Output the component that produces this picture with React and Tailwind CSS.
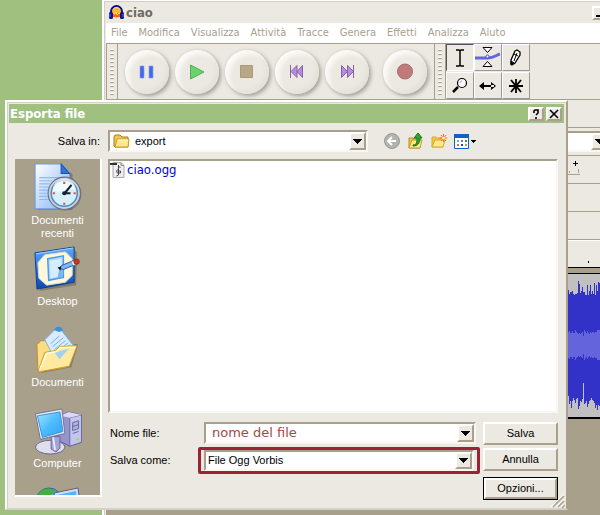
import React, { useState } from 'react';
import { clsx } from 'clsx';

const MENUS = ['File', 'Modifica', 'Visualizza', 'Attività', 'Tracce', 'Genera', 'Effetti', 'Analizza', 'Aiuto'];

// peak heights of the visible piece of the track, in pixels
const PEAK_TOP = [16, 20, 18, 18, 17, 20, 21, 20, 20, 19, 7, 10, 19, 17, 13, 18, 18, 21, 21, 11, 21, 17, 11, 20, 17, 20, 9, 21, 11, 17, 8, 9];
const PEAK_BOTTOM = [122, 130, 127, 134, 127, 124, 126, 129, 125, 124, 135, 132, 127, 128, 125, 109, 130, 129, 127, 133, 130, 127, 126, 124, 126, 127, 129, 134, 131, 136, 131, 132];
const RMS = [13, 14, 12, 12, 14, 12, 12, 15, 13, 12, 11, 12, 11, 12, 13, 9, 15, 13, 12, 14, 12, 11, 13, 12, 13, 13, 12, 13, 13, 15, 15, 15];

const raised = 'border-2 border-t-white border-l-white border-r-[#a8a08b] border-b-[#a8a08b]';
const sunken = 'border-2 border-t-[#a8a08b] border-l-[#a8a08b] border-r-[#f8f7f3] border-b-[#f8f7f3]';

const DownArrow = () => (
  <svg width="9" height="5" viewBox="0 0 9 5" shapeRendering="crispEdges" aria-hidden="true">
    <path d="M0 0h9v1H8v1H7v1H6v1H5v1H4V4H3V3H2V2H1V1H0z" fill="#000" />
  </svg>
);

const Headphones = () => (
  <svg width="15" height="15" viewBox="0 0 15 15" aria-hidden="true">
    <circle cx="7.5" cy="8" r="5" fill="#ffb52e" />
    <path d="M4 8h7v4H4z" fill="#f4661b" />
    <path d="M4 8l2 1 1-2 1 3 2-2 1 1" stroke="#ffe052" fill="none" />
    <path d="M2 9V6.5a5.5 5.5 0 0 1 11 0V9" fill="none" stroke="#0a1479" strokeWidth="2" />
    <rect x="0" y="7" width="4" height="7" rx="1.5" fill="#0a1496" />
    <rect x="11" y="7" width="4" height="7" rx="1.5" fill="#0a1496" />
    <path d="M1 9v3M14 9v3" stroke="#5b79e8" />
  </svg>
);

const transport = [
  { label: 'Pausa', icon: <path d="M3 4h4v12H3zM12 4h4v12h-4z" fill="#4468e8" stroke="#8a9ff0" strokeWidth=".6" /> },
  { label: 'Suona', icon: <path d="M3.500 3v14L17 10z" fill="#68d568" stroke="#5aa860" /> },
  { label: 'Ferma', icon: <path d="M3.500 3.500h12v12h-12z" fill="#b8a888" stroke="#a89a7c" /> },
  { label: 'Inizio', icon: <path d="M3.500 3v13M10 3.500v12L4 9.500zM15.500 3.500v12L10 9.500z" fill="#b98ae0" stroke="#8564a5" /> },
  { label: 'Fine', icon: <path d="M16.500 3v13M4.500 3.500v12l6-6zM10.500 3.500v12l6-6z" fill="#b98ae0" stroke="#8564a5" /> },
  { label: 'Registra', icon: <circle cx="10" cy="9.500" r="7.500" fill="#c17a7c" stroke="#a8686a" />, extra: 'ml-2' },
];

const tools = [
  {
    label: 'Selezione',
    icon: <path d="M10 6h3l1 1 1-1h3M14 7v14M10 22h3l1-1 1 1h3" stroke="#000" strokeWidth="1.500" fill="none" />,
  },
  {
    label: 'Inviluppo',
    icon: (
      <>
        <path d="M1 14h13c6 0 8-3 12-4" stroke="#6468e0" strokeWidth="3" fill="none" />
        <path d="M9 3.500h9l-4.500 5zM9 22.500h9l-4.500-5z" fill="#fff" stroke="#000" />
        <circle cx="13.500" cy="12.500" r="1.500" fill="#fff" stroke="#4448c0" />
      </>
    ),
  },
  {
    label: 'Disegno',
    icon: (
      <>
        <path d="M13 7l2-1 3 2v3l-5 8-3 2-1-1v-4z" fill="#fff" stroke="#000" strokeWidth="1.300" />
        <path d="M12 10l4 2M9 17l3 2-3 2zM15 9l-3 8" stroke="#000" fill="#000" />
      </>
    ),
  },
  {
    label: 'Zoom',
    icon: (
      <>
        <path d="M12 15l-5 5" stroke="#000" strokeWidth="2.500" />
        <circle cx="16" cy="11" r="4.500" fill="#fff" stroke="#000" strokeWidth="1.200" />
        <path d="M14 11c0-1 1-2 2-2" stroke="#999" fill="none" />
      </>
    ),
  },
  {
    label: 'Spostamento',
    icon: <path d="M7 13h13v2H7zM5 14l5-4v8zM22 14l-5-4v8z" fill="#000" />,
  },
  {
    label: 'Multistrumento',
    icon: <path d="M14 7v14M7 14h14M9 8l5 6 5-6M9 20l5-6 5 6" stroke="#000" strokeWidth="1.800" fill="none" />,
  },
];

const Grabber = () => (
  <div className="flex flex-col gap-[2px] px-[3px]">
    {Array.from({ length: 12 }, (_, i) => (
      <span key={i} className="h-[2px] w-1 border-t border-b border-t-white border-b-[#a8a08b]" />
    ))}
  </div>
);

const TransportButton = ({ label, icon, extra }) => (
  <button
    type="button"
    aria-label={label}
    className={clsx(
      'flex size-11 shrink-0 items-center justify-center rounded-full bg-[#ece9e2] shadow-[inset_4px_4px_4px_#fbfaf7,inset_-3px_-3px_4px_#e4e1da,2px_2px_4px_#a19e98,-1px_-1px_3px_#e2dfd8]',
      extra
    )}
  >
    <svg width="20" height="20" viewBox="0 0 20 20">{icon}</svg>
  </button>
);

const Waveform = () => (
  <svg width="76" height="143" viewBox="0 0 76 143" shapeRendering="crispEdges" className="ml-auto block">
    {Array.from({ length: 76 }, (_, x) => {
      const i = x % PEAK_TOP.length;
      return (
        <g key={x}>
          <rect x={x} y={PEAK_TOP[i]} width="1" height={PEAK_BOTTOM[i] - PEAK_TOP[i]} fill="#3232c8" />
          <rect x={x} y={71 - RMS[i]} width="1" height={RMS[i] * 2} fill="#6464dc" />
        </g>
      );
    })}
  </svg>
);

const CaptionButton = ({ label, children }) => (
  <button type="button" aria-label={label} className={clsx('flex h-[14px] w-4 items-center justify-center bg-[#ece9e2]', raised)}>
    <svg width="12" height="10" viewBox="0 0 12 10" fill="none" stroke="#000" strokeWidth="1.600">{children}</svg>
  </button>
);

const AudacityWindow = () => (
  <div className="absolute top-0 -right-11 bottom-0 left-[102px] flex flex-col border-l-2 border-white bg-[#ece9e2]">
    <div className="h-[2px] shrink-0 border-b border-[#d4d0c8] bg-white" />
    <div className="flex flex-1 flex-col border-l border-[#d4d0c8] pl-px">
      <header className="flex h-[21px] items-center gap-[2px] pr-1 pl-[3px]">
        <Headphones />
        <h1 className="font-['DejaVu_Sans_Condensed','DejaVu_Sans',sans-serif] text-[13px] font-bold text-[#6e6b66]">ciao</h1>
        <div className="ml-auto flex">
          <CaptionButton label="Riduci a icona"><path d="M2 8h6" strokeWidth="2" /></CaptionButton>
          <CaptionButton label="Ingrandisci"><path d="M2 1h8v8H2z" strokeWidth="1" /></CaptionButton>
          <CaptionButton label="Chiudi ciao"><path d="M2 1l8 8M10 1l-8 8" /></CaptionButton>
        </div>
      </header>

      <nav className="flex h-5 items-center gap-[11px] bg-white pl-[5px] font-['DejaVu_Sans_Condensed','DejaVu_Sans',sans-serif] text-[11px] text-[#a8a08b]">
        {MENUS.map((menu) => (
          <button key={menu} type="button">{menu}</button>
        ))}
      </nav>

      <div className="flex h-[57px] border-t border-b border-[#a8a08b]">
        <div className="flex items-center border-r border-l border-[#a8a08b]">
          <Grabber />
        </div>
        <div className="flex items-center gap-[6px] px-[7px]">
          {transport.map((item) => (
            <TransportButton key={item.label} {...item} />
          ))}
        </div>
        <div className="flex items-center border-r border-l border-[#a8a08b]">
          <Grabber />
        </div>
        <div className="grid grid-cols-3">
          {tools.map((tool, i) => (
            <button
              key={tool.label}
              type="button"
              aria-label={tool.label}
              className={clsx(
                'h-[27px] w-7 border',
                i === 0 ? 'border-t-[#555] border-r-white border-b-white border-l-[#555]' : 'border-t-white border-r-[#999] border-b-[#999] border-l-white'
              )}
            >
              <svg width="26" height="25" viewBox="1 1 26 25">{tool.icon}</svg>
            </button>
          ))}
        </div>
      </div>

      <div className="h-7 border-b border-[#a8a08b]" />
      <div className="flex h-7 items-center border-b border-[#a8a08b] pr-[34px]">
        <div className={clsx('ml-auto flex h-[21px] w-[140px] justify-end bg-white', sunken)}>
          <button type="button" aria-label="Dispositivo" className={clsx('flex w-[17px] items-center justify-center bg-[#ece9e2]', raised)}>
            <DownArrow />
          </button>
        </div>
      </div>
      <div className="flex h-7 justify-end border-b border-[#a8a08b] pr-[61px]">
        <svg width="16" height="27" viewBox="0 0 16 27" shapeRendering="crispEdges" aria-hidden="true">
          <path d="M6 7.500h5M8.500 5v5" stroke="#000" />
          <path d="M2.500 15v2M11.500 13v4M0 18.500h13" stroke="#a8a08b" />
        </svg>
      </div>
      <div className="h-7 border-b border-[#a8a08b]" />
      <div className="h-7 border-b border-[#a8a08b]" />
      <div className="flex h-[28px] items-end justify-end border-t border-b border-t-white border-b-black pr-[55px] pb-1">
        <span className="h-[2px] w-px bg-black" />
      </div>
      <div className="h-[5px] bg-[#a8a08b]" />
      <div className="border-t border-b-2 border-black bg-[#c0c0c0]">
        <Waveform />
      </div>
      <div className="flex-1 bg-[#a8a08b]" />
    </div>
  </div>
);

const RecentIcon = () => (
  <svg width="50" height="50" viewBox="0 0 48 48" aria-hidden="true">
    <defs>
      <linearGradient id="page" x1="0" y1="0" x2="1" y2="1">
        <stop offset="0" stopColor="#fff" />
        <stop offset="1" stopColor="#7fb2f5" />
      </linearGradient>
    </defs>
    <path d="M4 46h34V12l-2-2z" fill="#5e584b" opacity=".5" />
    <path d="M2 2h25l8 9v34H2z" fill="url(#page)" stroke="#6c9be0" />
    <path d="M27 2v9h8z" fill="#2f74dc" stroke="#1a52b4" />
    <path d="M6 15h22M6 18h12M6 21h10M6 24h9M6 27h9M6 30h9M6 33h9M6 36h10" stroke="#8fb9f2" />
    <circle cx="31" cy="31" r="15.500" fill="#5e584b" opacity=".5" />
    <circle cx="30" cy="30" r="15.500" fill="#c9d2dd" stroke="#66707c" />
    <circle cx="30" cy="30" r="12.500" fill="#d4f0ff" stroke="#4c8fc8" strokeWidth="1.500" />
    <path d="M19 27a11 11 0 0 1 22 0c-6-3-12 4-22 0" fill="#fff" opacity=".7" />
    <path d="M37 22l-7 8.500M30 30h6" stroke="#17202c" strokeWidth="2" fill="none" />
    <circle cx="30" cy="30" r="2" fill="#17202c" />
    <path d="M29 19h2v2h-2zM29 39h2v2h-2zM19 29h2v2h-2zM39 29h2v2h-2z" fill="#ee5022" />
  </svg>
);

const DesktopIcon = () => (
  <svg width="47" height="47" viewBox="0 0 48 48" aria-hidden="true">
    <defs>
      <linearGradient id="frame" x1="0" y1="0" x2="0" y2="1">
        <stop offset="0" stopColor="#5eaaf8" />
        <stop offset=".5" stopColor="#2a78e0" />
        <stop offset="1" stopColor="#0f48b0" />
      </linearGradient>
    </defs>
    <path d="M5 46l38-6 1-33-3-4z" fill="#5e584b" opacity=".5" />
    <path d="M1 7l40-6v36L3 44z" fill="url(#frame)" stroke="#0b3f96" />
    <path d="M2 8l38-6" stroke="#a5d3ff" />
    <path d="M11 9l21-3 7 7v17l-7 7-19 3-8-7-1-16z" fill="#fff8dc" stroke="#e0dcc0" />
    <path d="M14 13l16-3v22l-15 3z" fill="#b3d9fc" stroke="#4b9be6" strokeWidth="1.500" />
    <path d="M16 15l12-2v17l-11 3z" fill="#d8ecff" />
    <path d="M26 22l-2 11 5-2V22z" fill="#7bb4ee" />
    <path d="M28 20l12-5 2 4-12 5-4-1z" fill="#7fb8f5" stroke="#1e5aa8" />
    <path d="M38 16l3-1 2 4-3 1z" fill="#f3f3f3" stroke="#888" strokeWidth=".5" />
    <circle cx="43.500" cy="16" r="2.800" fill="#cc3a1c" stroke="#842010" strokeWidth=".7" />
    <path d="M24 22l4-1-1 4z" fill="#111" />
  </svg>
);

const DocumentsIcon = () => (
  <svg width="47" height="47" viewBox="0 0 48 48" aria-hidden="true">
    <path d="M7 47l31-6 7-23-3-1z" fill="#5e584b" opacity=".5" />
    <path d="M3 18l4-4 6 0 3 4h17v23L4 46z" fill="#fbdd83" stroke="#c18d25" />
    <path d="M11 13L23 1h3l15 19-18 16z" fill="#d8ebff" stroke="#7eaee2" />
    <path d="M20 3l3-3h4l3 3-4 2z" fill="#3a92dc" />
    <path d="M17 17l9-8M19 20l11-9M21 23l11-9M23 26l12-10M25 28l12-10" stroke="#7babe2" />
    <path d="M4 46l7-20 11-2 4-4 18-1-8 21z" fill="#ffeaa0" stroke="#d39a26" />
    <path d="M21 26l15-4-10 11z" fill="#a5d1ef" />
    <path d="M6 43l7-16 10-2 4-4h15" fill="none" stroke="#fffbe0" strokeWidth="1.500" />
  </svg>
);

const ComputerIcon = () => (
  <svg width="50" height="47" viewBox="0 0 50 48" aria-hidden="true">
    <defs>
      <linearGradient id="screen" x1="0" y1="0" x2="1" y2="1">
        <stop offset="0" stopColor="#a4e8ff" />
        <stop offset=".5" stopColor="#4cbcff" />
        <stop offset="1" stopColor="#38a0f0" />
      </linearGradient>
    </defs>
    <path d="M27 8l9-4 13 3v28l-12 4-12-6z" fill="#9595cc" stroke="#5c5c96" />
    <path d="M37 10l12-3v28l-12 4z" fill="#c4c4ec" stroke="#6969a4" />
    <path d="M27 8l9-4 13 3-12 3z" fill="#dadaf8" />
    <path d="M40 15l6-2v8l-6 2zM40 26l6-2M40 19l6-2" fill="#b4b4e0" stroke="#6464a0" />
    <circle cx="45" cy="32" r="1.300" fill="#76f038" />
    <ellipse cx="17" cy="40" rx="15" ry="7" fill="#dedeee" stroke="#656592" />
    <path d="M18 29h9v12l-4 4-5-3z" fill="#a4a4d4" stroke="#686898" />
    <path d="M20 30l2 13" stroke="#e5e5fa" strokeWidth="2" />
    <path d="M2 6l27-5 3 25-25 6z" fill="#ececfa" stroke="#737398" />
    <path d="M4 8l23-4 3 20-21 6z" fill="url(#screen)" stroke="#3c90d0" />
  </svg>
);

const NetworkIcon = () => (
  <svg width="48" height="40" viewBox="0 0 48 40" aria-hidden="true">
    <circle cx="15" cy="14" r="13" fill="#48a9df" stroke="#26649a" />
    <path d="M5 6c5-6 12-5 16-2l-4 4-5 1-2 5-7-2z" fill="#45b13c" />
    <path d="M20 6l24-5 3 22-23 5z" fill="#d8dcf4" stroke="#565f8c" />
    <path d="M23 8l19-4 2 17-19 4z" fill="#4eb7f6" />
  </svg>
);

const places = [
  { label: 'Documenti recenti', icon: <RecentIcon />, height: 'h-[84px]' },
  { label: 'Desktop', icon: <DesktopIcon />, height: 'h-[81px]' },
  { label: 'Documenti', icon: <DocumentsIcon />, height: 'h-[81px]' },
  { label: 'Computer', icon: <ComputerIcon />, height: 'h-[79px]' },
  { label: '', icon: <NetworkIcon />, height: 'h-10' },
];

const FolderIcon = () => (
  <svg width="17" height="15" viewBox="0 0 17 15" aria-hidden="true">
    <path d="M1 3l1-2h5l2 2h6v10H2L1 12z" fill="#f1c84f" stroke="#a77c18" />
    <path d="M2 13L4 5h12l-1 8z" fill="#ffe88d" stroke="#c79a28" />
    <path d="M5 6h10" stroke="#fff9d5" />
  </svg>
);

const FileBar = () => (
  <div className="flex items-center">
    <button type="button" aria-label="Indietro" className="mr-2">
      <svg width="16" height="16" viewBox="0 0 16 16">
        <circle cx="8" cy="8" r="7.500" fill="#b2b2b0" stroke="#999" />
        <path d="M12 8H5M8 4L4 8l4 4" fill="none" stroke="#fff" strokeWidth="2" />
      </svg>
    </button>
    <button type="button" aria-label="Livello superiore" className="mr-2">
      <svg width="15" height="18" viewBox="0 0 15 18">
        <path d="M1 6h4l1 1h6v9H1z" fill="#efc748" stroke="#b58b20" />
        <path d="M1 16l3-8h10l-2 8z" fill="#ffe98c" stroke="#c59b2c" />
        <path d="M5 13c4 0 4-3 4-7H6l4-5 4 5h-2c0 5-2 8-7 8z" fill="#2da82a" stroke="#13701a" />
      </svg>
    </button>
    <button type="button" aria-label="Nuova cartella" className="mr-[7px]">
      <svg width="16" height="16" viewBox="0 0 16 16">
        <path d="M1 4h4l1 1h6v9H1z" fill="#efc748" stroke="#d6ab35" />
        <path d="M1 14l3-7h10l-2 7z" fill="#ffe98c" stroke="#d6ab35" />
        <path d="M12.500 1v8M8.500 5h8M10 2l5 6M15 2l-5 6" stroke="#f26a2c" />
        <circle cx="12.500" cy="5" r="1.500" fill="#fff0b0" />
      </svg>
    </button>
    <button type="button" aria-label="Visualizza elenco" className="flex items-center gap-[2px]">
      <svg width="15" height="15" viewBox="0 0 15 15">
        <path d="M.5.5h14v14H.5z" fill="#fff" stroke="#1160c8" />
        <path d="M0 0h15v4H0z" fill="#1160c8" />
        <path d="M3 6h2v2H3z" fill="#99b" /><path d="M7 6h2v2H7z" fill="#77a" /><path d="M11 6h2v2h-2z" fill="#2a9a38" />
        <path d="M3 10h2v2H3z" fill="#f0703c" /><path d="M7 10h2v2H7z" fill="#1746b8" /><path d="M11 10h2v2h-2z" fill="#c8a02c" />
      </svg>
      <svg width="5" height="3" viewBox="0 0 5 3" shapeRendering="crispEdges"><path d="M0 0h5v1H4v1H3v1H2V2H1V1H0z" /></svg>
    </button>
  </div>
);

// select with the classic raised drop button on its right end
const ClassicSelect = ({ id, options, icon, className }) => (
  <div className={clsx('relative flex items-center bg-white', sunken, className)}>
    {icon}
    <select id={id} className="h-full min-w-0 flex-1 appearance-none bg-transparent pl-[2px] leading-none outline-none">
      {options.map((option) => (
        <option key={option}>{option}</option>
      ))}
    </select>
    <span className={clsx('pointer-events-none absolute top-0 right-0 bottom-0 flex w-[17px] items-center justify-center bg-[#ece9e2]', raised)}>
      <DownArrow />
    </span>
  </div>
);

const ExportDialog = () => {
  const [fileName, setFileName] = useState('nome del file');

  return (
    <div
      role="dialog"
      aria-labelledby="export-title"
      className="absolute top-[100px] right-8 left-[5px] border-2 border-t-white border-r-[#a8a08b] border-b-[#d4d0c8] border-l-white bg-[#ece9e2] font-['Liberation_Sans',Arial,sans-serif] text-[11px] text-black"
    >
      <div className="border-t border-l border-[#d4d0c8] pt-px pr-[2px] pb-2 pl-px">
        <header className="flex h-[19px] items-center gap-[2px] bg-[#a0c080] pr-[2px] pl-px">
          <h2 id="export-title" className="mr-auto font-['DejaVu_Sans_Condensed','DejaVu_Sans',sans-serif] text-[13px] font-bold text-white">
            Esporta file
          </h2>
          <CaptionButton label="Guida"><path d="M4 4V2l1-1h3v3L6 6M6 8v2" /></CaptionButton>
          <CaptionButton label="Chiudi"><path d="M2 1l8 8M10 1l-8 8" /></CaptionButton>
        </header>

        <div className="px-[6px] pt-[7px]">
          <div className="flex items-center">
            <label htmlFor="folder" className="w-[85px] text-right">Salva in:</label>
            <ClassicSelect
              id="folder"
              options={['export']}
              icon={<span className="px-[3px]"><FolderIcon /></span>}
              className="mr-4 ml-2 h-[22px] flex-1"
            />
            <div className="w-[174px]">
              <FileBar />
            </div>
          </div>

          <div className="mt-[7px] flex items-start gap-[6px]">
            <nav className="flex h-[338px] w-[87px] shrink-0 flex-col overflow-hidden border-r-2 border-b-2 border-white bg-[#a8a08b] pt-[3px]">
              {places.map(({ label, icon, height }) => (
                <button
                  key={label}
                  type="button"
                  aria-label={label || 'Risorse di rete'}
                  className={clsx('flex shrink-0 flex-col items-center gap-[2px] px-3 leading-[13px] text-white', height)}
                >
                  {icon}
                  {label && <span>{label}</span>}
                </button>
              ))}
            </nav>

            <div className="min-w-0 flex-1">
              <ul className={clsx('h-[254px] bg-white', sunken)}>
                <li className="flex items-center gap-[2px] font-['DejaVu_Sans_Condensed','DejaVu_Sans',sans-serif] text-[13px] leading-[18px] text-[#0000e0]">
                  <svg width="15" height="17" viewBox="0 0 15 17" aria-hidden="true">
                    <path d="M3 .5h8l3 3v12H3z" fill="#eee" stroke="#aaa" />
                    <path d="M11 .5v3h3" fill="none" stroke="#888" />
                    <path d="M0 1h7v2H0z" fill="#333" />
                    <path d="M8.500 3v10l-2 1M8.500 4l2 2M8.500 7l-2 2 1 2h3V9h-2" fill="none" stroke="#444" />
                  </svg>
                  ciao.ogg
                </li>
              </ul>

              <div className="mt-[9px] flex items-start gap-[3px]">
                <div className="flex min-w-0 flex-1 flex-col gap-[3px]">
                  <div className="flex items-center">
                    <label htmlFor="file-name" className="w-24 shrink-0 pl-[2px]">Nome file:</label>
                    <div className={clsx('mr-1 flex h-[22px] min-w-0 flex-1 bg-white', sunken)}>
                      <input
                        id="file-name"
                        type="text"
                        value={fileName}
                        onChange={(e) => setFileName(e.target.value)}
                        className="min-w-0 flex-1 bg-transparent pl-[6px] font-['DejaVu_Sans',sans-serif] text-[13px] text-[#a04848] outline-none"
                      />
                      <button type="button" aria-label="Nomi recenti" className={clsx('flex w-[17px] items-center justify-center bg-[#ece9e2]', raised)}>
                        <DownArrow />
                      </button>
                    </div>
                  </div>
                  <div className="flex items-center">
                    <label htmlFor="file-type" className="w-[90px] shrink-0 pl-[2px]">Salva come:</label>
                    <div className="min-w-0 flex-1 rounded-[2px] border-[3px] border-[#9b2335] px-[3px]">
                      <ClassicSelect id="file-type" options={['File Ogg Vorbis']} className="h-[21px]" />
                    </div>
                  </div>
                </div>

                <div className="flex w-[75px] shrink-0 flex-col gap-[3px]">
                  <button type="button" className={clsx('h-[23px]', raised)}>Salva</button>
                  <button type="button" className={clsx('h-[23px]', raised)}>Annulla</button>
                  <div className="mt-[3px] flex border border-black">
                    <button type="button" className={clsx('h-[21px] flex-1', raised)}>Opzioni...</button>
                  </div>
                </div>
              </div>
            </div>
          </div>
        </div>
      </div>
      <svg width="14" height="14" viewBox="0 0 14 14" className="absolute right-[1px] bottom-0" aria-hidden="true">
        <path d="M0 13L13 0M5 13l8-8M10 13l3-3" stroke="#fff" />
        <path d="M2 13L13 2M7 13l6-6M11 14l3-3" stroke="#a8a08b" strokeWidth="1.500" />
      </svg>
    </div>
  );
};

export default function App() {
  return (
    <main className="relative min-h-screen w-full overflow-hidden bg-[#a0c080]">
      <AudacityWindow />
      <ExportDialog />
    </main>
  );
}
